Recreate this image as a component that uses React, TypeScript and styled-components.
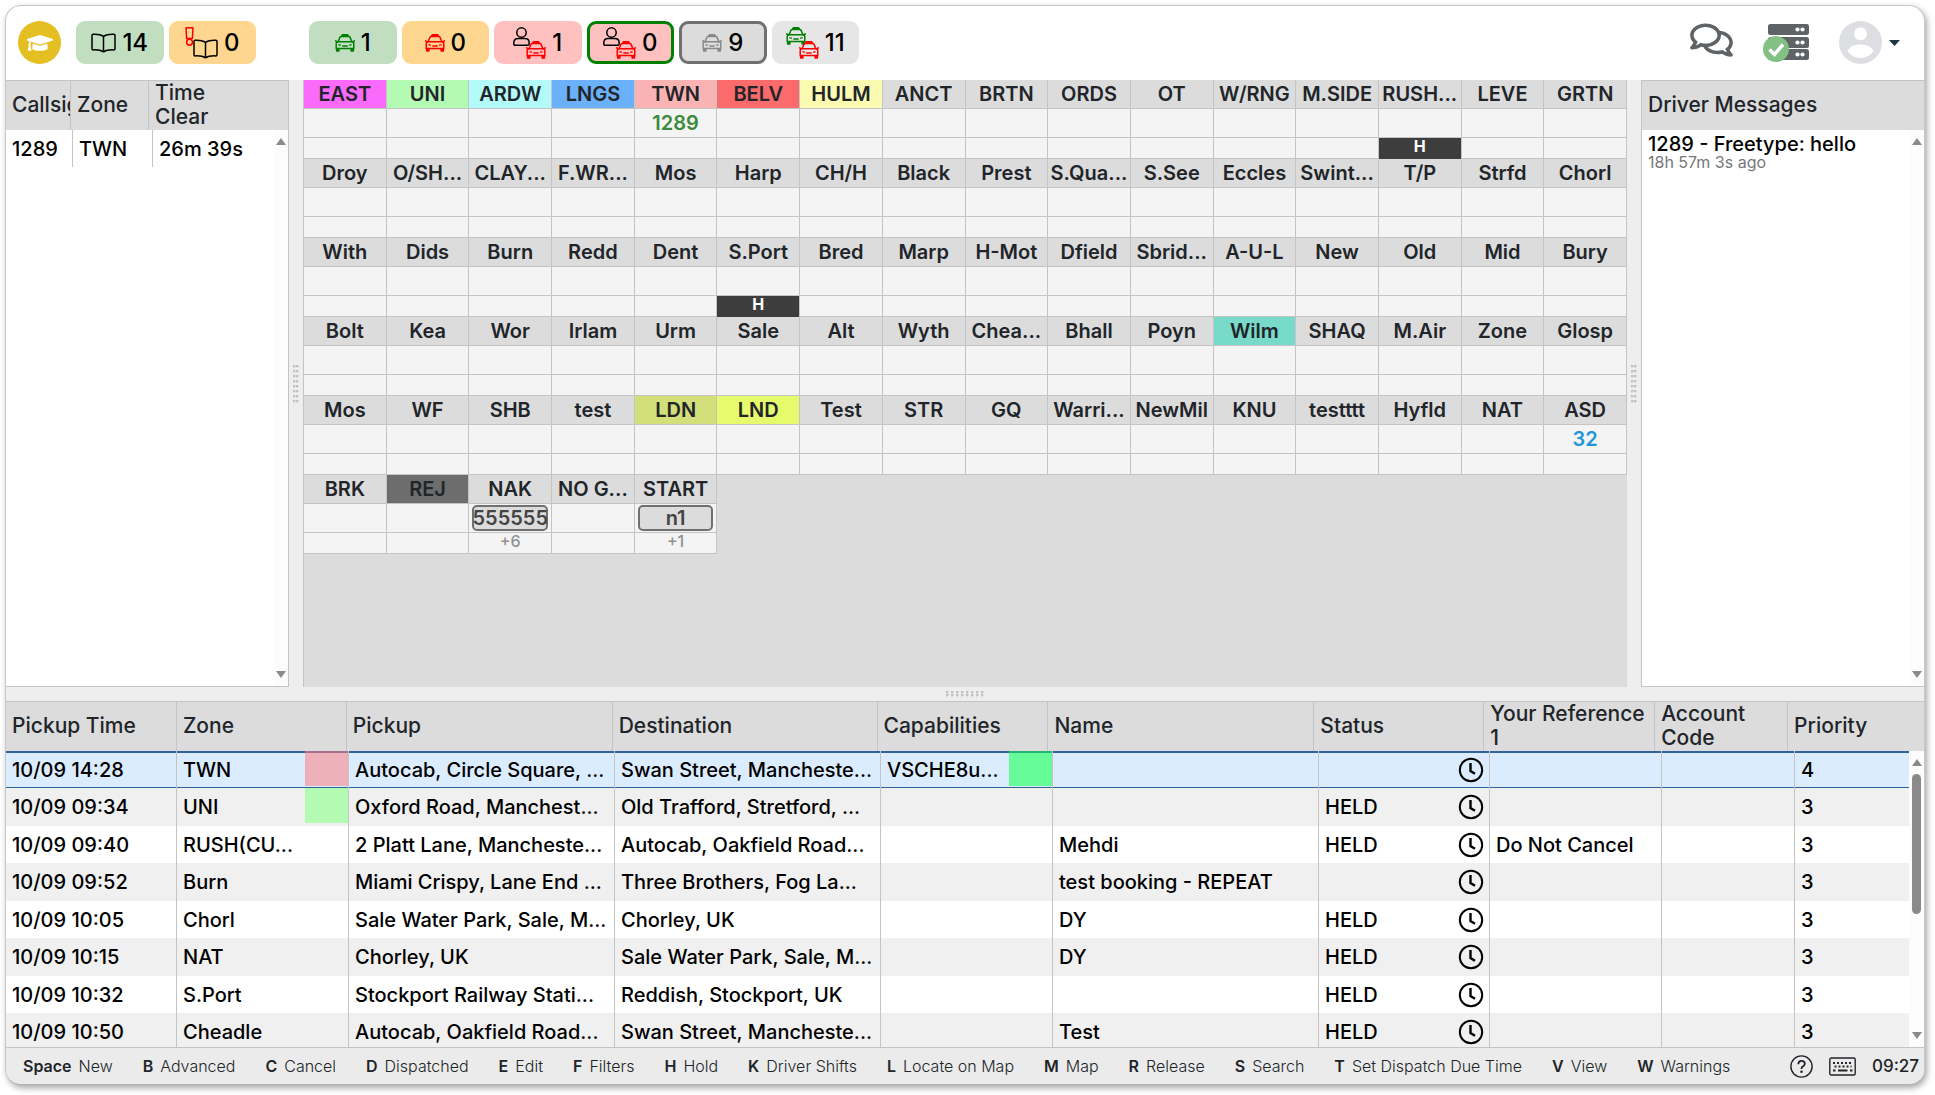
import React from 'react';
import styled, { createGlobalStyle } from 'styled-components';
import { FaGraduationCap, FaRegComments } from 'react-icons/fa';

const Global = createGlobalStyle`
  *, *::before, *::after { box-sizing: border-box; }
  body { margin: 0; background: #fff; color: #212529; font-family: Inter, "Liberation Sans", sans-serif; font-size: 20px; line-height: 24px; }
  button { font: inherit; color: inherit; border: 0; padding: 0; background: none; cursor: pointer; }
  svg { display: block; }
`;

const LINE = '#c4c4c4';
const HEAD = '#dcdcdc';

const Shell = styled.div`
  display: flex;
  flex-direction: column;
  min-height: calc(100vh - 15px);
  margin: 5px 10px 10px 5px;
  border: 1px solid #c8c8c8;
  border-bottom-color: #b4b4b4;
  border-radius: 16px;
  overflow: hidden;
  box-shadow: 2px 3px 6px rgba(0, 0, 0, 0.35);
  background: #fff;
`;

const TopBar = styled.header`
  display: flex;
  align-items: flex-start;
  height: 74px;
  padding: 15px 24px 0 12px;
`;

const Round = styled.button`
  display: grid;
  place-items: center;
  width: 43px;
  height: 43px;
  border-radius: 50%;
  background: #e4bf22;
  color: #fff;
`;

const Counters = styled.div<{ $count: number; $width: number; $gap: number }>`
  display: grid;
  grid-template-columns: repeat(${(p) => p.$count}, 1fr);
  gap: 5px;
  width: ${(p) => p.$width}px;
  margin-left: ${(p) => p.$gap}px;
`;

const Counter = styled.button<{ $bg: string; $edge?: string }>`
  display: flex;
  align-items: center;
  justify-content: center;
  gap: 6px;
  height: 43px;
  border-radius: 9px;
  border: 3px solid ${(p) => p.$edge || p.$bg};
  background: ${(p) => p.$bg};
  color: #000;
  font-size: 24px;
  font-weight: 500;
`;

const Pair = styled.span`
  display: grid;
  width: 33px;
  height: 32px;
  > * { grid-area: 1 / 1; }
  > :last-child { align-self: end; justify-self: end; }
`;

const Tools = styled.div`
  display: flex;
  align-items: flex-start;
  gap: 30px;
  margin-left: auto;
  color: #5f6366;
`;

const Tool = styled.button<{ $top?: boolean }>`
  display: flex;
  align-items: ${(p) => (p.$top ? 'flex-start' : 'center')};
  gap: 7px;
  height: 43px;
`;

const CommentsIcon = styled(FaRegComments)`
  width: 43px;
  height: 38px;
`;

const Panels = styled.main`
  display: grid;
  grid-template-columns: 283px 14px minmax(0, 1fr) 14px 283px;
  flex: 1;
`;

const Splitter = styled.div<{ $wide?: boolean }>`
  display: grid;
  place-items: center;
  min-height: 14px;
  background: #eee;
  &::after {
    content: '';
    width: ${(p) => (p.$wide ? 38 : 6)}px;
    height: ${(p) => (p.$wide ? 6 : 38)}px;
    background: radial-gradient(circle at 1px 1px, #c2c2c2 1px, transparent 2px) 0 0 /
      ${(p) => (p.$wide ? '5px 3px' : '3px 5px')};
  }
`;

const Panel = styled.section<{ $side: 'left' | 'right' }>`
  display: flex;
  flex-direction: column;
  border-top: 1px solid ${LINE};
  border-bottom: 1px solid ${LINE};
  border-${(p) => (p.$side === 'left' ? 'right' : 'left')}: 1px solid ${LINE};
`;

const PanelBody = styled.div`
  display: flex;
  flex: 1;
`;

const PanelTitle = styled.h2`
  display: flex;
  align-items: center;
  height: 49px;
  margin: 0;
  padding: 0 6px 1px;
  background: ${HEAD};
  font-size: 21px;
  font-weight: 500;
`;

const Message = styled.article`
  flex: 1;
  padding: 2px 6px;
  color: #000;
  font-weight: 500;
`;

const Ago = styled.div`
  color: #777;
  font-size: 16px;
  font-weight: 400;
  line-height: 12px;
`;

const Bar = styled.div`
  display: flex;
  flex-direction: column;
  align-items: center;
  width: 15px;
  padding: 8px 0;
  background: #fcfcfc;
`;

const Arrow = styled.span<{ $down?: boolean }>`
  width: 0;
  height: 0;
  margin-top: ${(p) => (p.$down ? 'auto' : '0')};
  border: solid transparent;
  border-width: 0 5px;
  ${(p) => (p.$down ? 'border-top: 7px solid #8a8a8a;' : 'border-bottom: 7px solid #8a8a8a;')}
`;

const Thumb = styled.span`
  width: 9px;
  height: 140px;
  margin-top: 8px;
  border-radius: 5px;
  background: #8a8a8a;
`;

const Table = styled.table`
  display: flex;
  flex-direction: column;
  width: 100%;
  border-spacing: 0;
`;

const HeadRow = styled.tr<{ $cols: string }>`
  display: grid;
  grid-template-columns: ${(p) => p.$cols};
  height: 49px;
  background: ${HEAD};
`;

const Th = styled.th`
  display: flex;
  align-items: center;
  min-width: 0;
  overflow: hidden;
  padding: 0 0 1px 6px;
  border-right: 1px solid ${LINE};
  text-align: left;
  font-size: 21px;
  font-weight: 500;
  &:last-child { border-right: 0; }
`;

const Row = styled.tr<{ $cols: string; $selected?: boolean }>`
  display: grid;
  grid-template-columns: ${(p) => p.$cols};
  height: 37px;
  color: #000;
  background: ${(p) => (p.$selected ? '#dbecff' : '#fff')};
  box-shadow: ${(p) => (p.$selected ? 'inset 0 2px #2f6498, inset 0 -1px #2f6498' : 'none')};
  &:nth-child(even) { height: 38px; background: #f0f0f0; }
`;

const Td = styled.td`
  display: flex;
  align-items: center;
  min-width: 0;
  overflow: hidden;
  white-space: nowrap;
  padding: 0 0 0 6px;
  border-right: 1px solid ${LINE};
  font-weight: 500;
  &:last-child { border-right: 0; }
`;

const Swatch = styled.span<{ $color: string; $edge?: string }>`
  align-self: flex-start;
  flex: none;
  width: 43px;
  height: 35px;
  margin-left: auto;
  background: ${(p) => p.$color};
  border-top: 2px solid ${(p) => p.$edge || p.$color};
`;

const ClockBox = styled.span`
  margin: 0 5px 0 auto;
`;

const Zones = styled.section`
  display: grid;
  grid-template-columns: repeat(16, minmax(0, 1fr));
  align-content: start;
  border-left: 1px solid ${LINE};
  background: ${HEAD};
`;

const Zone = styled.div`
  border-right: 1px solid ${LINE};
  background: #f4f4f4;
  text-align: center;
  font-weight: 600;
`;

const ZoneName = styled.div<{ $bg?: string }>`
  height: 29px;
  overflow: hidden;
  white-space: nowrap;
  border-bottom: 1px solid ${LINE};
  background: ${(p) => p.$bg || HEAD};
  line-height: 28px;
`;

const ZoneCar = styled.div<{ $color?: string }>`
  display: flex;
  align-items: center;
  justify-content: center;
  height: 29px;
  border-bottom: 1px solid ${LINE};
  color: ${(p) => p.$color || '#444'};
`;

const Chip = styled.button`
  display: flex;
  align-items: center;
  justify-content: center;
  flex: 1;
  min-width: 0;
  height: 26px;
  margin: 0 3px;
  border: 2px solid #707070;
  border-radius: 5px;
  background: ${HEAD};
  color: #444;
`;

const ZoneNote = styled.div<{ $held?: boolean }>`
  height: 21px;
  border-bottom: 1px solid ${(p) => (p.$held ? '#3d3d3d' : LINE)};
  background: ${(p) => (p.$held ? '#3d3d3d' : 'transparent')};
  color: ${(p) => (p.$held ? '#fff' : '#909090')};
  font-size: 16px;
  font-weight: ${(p) => (p.$held ? 700 : 500)};
  line-height: 17px;
`;

const Bookings = styled.section`
  border-top: 1px solid ${LINE};
`;

const BookingBody = styled.tbody`
  display: block;
  flex: none;
  height: 296px;
  overflow: hidden;
`;

const BookingGrid = styled.div`
  display: grid;
  grid-template-columns: minmax(0, 1fr) 15px;
  > table { grid-area: 1 / 1 / 2 / 3; }
  > div { grid-area: 1 / 2; margin-top: 49px; z-index: 1; }
  tbody { margin-right: 15px; }
`;

const Footer = styled.footer`
  display: flex;
  align-items: center;
  height: 37px;
  padding: 0 5px 0 17px;
  border-top: 1px solid ${LINE};
  background: #ebebeb;
  font-size: 16px;
`;

const Keys = styled.nav`
  display: flex;
  gap: 30px;
  white-space: nowrap;
`;

const Key = styled.button`
  display: flex;
  gap: 7px;
  font-weight: 300;
  b { font-weight: 600; }
`;

const Status = styled.div`
  display: flex;
  align-items: center;
  gap: 16px;
  margin-left: auto;
  font-size: 17px;
  font-weight: 500;
`;

const Taxi = ({ color }: { color: string }) => (
  <svg width="20" height="18" viewBox="0 0 20 18" fill="none" stroke={color} strokeWidth="1.5" strokeLinejoin="round">
    <path d="M6.5 2.3 7.3.8h5.4l.8 1.5z" fill={color} />
    <path d="M3 8.2 4.8 3.6q.4-1 1.5-1h7.4q1.1 0 1.5 1L17 8.2" />
    <path d="M0 6.6 3.2 8M20 6.6 16.8 8" />
    <path d="M3.2 7.8h13.6q2 0 2 2v4.8H1.2V9.8q0-2 2-2z" />
    <path d="M1.6 14.6v2.5h2.3v-2.5M16.1 14.6v2.5h2.3v-2.5" fill={color} />
    <path d="M3.4 10.6l2.5.8M16.6 10.6l-2.5.8M7.3 12.1h5.4" />
  </svg>
);

const Person = () => (
  <svg width="17" height="19" viewBox="0 0 17 19" fill="none" stroke="#000" strokeWidth="1.5">
    <circle cx="8.5" cy="5.5" r="4.7" />
    <path d="M5.2 11.5h6.6q4.4 0 4.4 4.4v1q0 1.3-1.3 1.3H2.1Q.8 18.2.8 16.9v-1q0-4.4 4.4-4.4z" />
  </svg>
);

const Book = () => (
  <svg width="25" height="20" viewBox="0 0 25 20" fill="none" stroke="#000" strokeWidth="1.5" strokeLinejoin="round">
    <path d="M12.5 3.3Q9 .9 2.2 1.2 1 1.3 1 2.5v13.2q0 1.2 1.2 1.2 7-.3 10.3 1.9 3.3-2.2 10.3-1.9 1.2 0 1.2-1.2V2.5q0-1.2-1.2-1.3-6.8-.3-10.3 2.1zM12.5 3.3v15.5" />
  </svg>
);

const Bang = () => (
  <svg width="9" height="19" viewBox="0 0 9 19" fill="none" stroke="#f00" strokeWidth="1.5" strokeLinejoin="round">
    <path d="M1 .8h7l-.6 10.6H1.6z" />
    <circle cx="4.5" cy="15.2" r="2.9" />
  </svg>
);

const Clock = () => (
  <svg width="26" height="26" viewBox="0 0 26 26" fill="none" stroke="currentColor" strokeWidth="2" role="img" aria-label="Scheduled">
    <circle cx="13" cy="13" r="11.2" />
    <path d="M12.5 6v8l4.5 2.8" strokeWidth="2.4" />
  </svg>
);

const Server = () => (
  <svg width="46" height="40" viewBox="0 0 46 40">
    {[1, 14, 26].map((y) => (
      <g key={y}>
        <rect x="5" y={y} width="41" height="11" rx="2.5" fill="#5f6366" />
        <circle cx="34.5" cy={y + 5.5} r="2.1" fill="#fff" />
        <circle cx="39.5" cy={y + 5.5} r="2.1" fill="#fff" />
      </g>
    ))}
    <circle cx="13" cy="26" r="13" fill="#82c083" />
    <path d="M6.5 26.5l5 5 8.5-10" fill="none" stroke="#fff" strokeWidth="3.5" />
  </svg>
);

const Avatar = () => (
  <svg width="43" height="43" viewBox="0 0 43 43">
    <circle cx="21.5" cy="21.5" r="21.5" fill="#dddee1" />
    <circle cx="21.5" cy="12.8" r="6.5" fill="#fff" />
    <path d="M8.5 30q2.5-6.5 13-6.5t13 6.5q-4.5 7-13 7t-13-7z" fill="#fff" />
  </svg>
);

const Help = () => (
  <svg width="23" height="23" viewBox="0 0 23 23" fill="none" stroke="currentColor" strokeWidth="1.4">
    <circle cx="11.5" cy="11.5" r="10.6" />
    <path d="M8.3 9.2q0-3.4 3.3-3.4 3.2 0 3.2 2.9 0 1.5-1.7 2.5-1.6.9-1.6 2.3v.6" strokeWidth="1.8" />
    <circle cx="11.5" cy="16.8" r=".6" />
  </svg>
);

const Keyboard = () => (
  <svg width="27" height="19" viewBox="0 0 27 19" fill="none" stroke="currentColor" strokeWidth="1.4">
    <rect x=".8" y="1" width="25.4" height="17" rx="1.5" />
    <path d="M4 6h19M5.5 9.5h17" strokeWidth="2" strokeDasharray="2 2" />
    <path d="M4 13.5h2.5M9 13.5h9.5M21 13.5h2.5" strokeWidth="1.8" />
  </svg>
);

const Scroll = ({ thumb }: { thumb?: boolean }) => (
  <Bar aria-hidden="true">
    <Arrow />
    {thumb && <Thumb />}
    <Arrow $down />
  </Bar>
);

const zoneNames = (
  'EAST|UNI|ARDW|LNGS|TWN|BELV|HULM|ANCT|BRTN|ORDS|OT|W/RNG|M.SIDE|RUSH...|LEVE|GRTN|' +
  'Droy|O/SH...|CLAY...|F.WR...|Mos|Harp|CH/H|Black|Prest|S.Qua...|S.See|Eccles|Swint...|T/P|Strfd|Chorl|' +
  'With|Dids|Burn|Redd|Dent|S.Port|Bred|Marp|H-Mot|Dfield|Sbrid...|A-U-L|New|Old|Mid|Bury|' +
  'Bolt|Kea|Wor|Irlam|Urm|Sale|Alt|Wyth|Chea...|Bhall|Poyn|Wilm|SHAQ|M.Air|Zone|Glosp|' +
  'Mos|WF|SHB|test|LDN|LND|Test|STR|GQ|Warri...|NewMil|KNU|testttt|Hyfld|NAT|ASD|' +
  'BRK|REJ|NAK|NO G...|START'
).split('|');

const zoneColors: Record<string, string> = {
  EAST: '#fb6bfb', UNI: '#b3fab3', ARDW: '#b3fafb', LNGS: '#6bb0fa', TWN: '#fab3b3', BELV: '#fb6b6b',
  HULM: '#fafab0', Wilm: '#78dac8', LDN: '#d3df78', LND: '#e6fb6b', REJ: '#6d6d6d',
};
const zoneCars: Record<string, { text: string; color: string }> = {
  TWN: { text: '1289', color: '#3c8a3c' },
  ASD: { text: '32', color: '#2196d8' },
};
const zoneQueue: Record<string, { text: string; more: string }> = {
  NAK: { text: '555555', more: '+6' },
  START: { text: 'n1', more: '+1' },
};
const heldZones = ['RUSH...', 'S.Port'];

type Booking = {
  time: string; zone: string; zoneColor?: string; zoneEdge?: string; from: string; to: string;
  caps?: string; name?: string; held?: boolean; reference?: string; priority: number;
};
const bookings: Booking[] = [
  { time: '10/09 14:28', zone: 'TWN', zoneColor: '#eeb0b9', zoneEdge: '#a8708c', from: 'Autocab, Circle Square, ...', to: 'Swan Street, Mancheste...', caps: 'VSCHE8u...', priority: 4 },
  { time: '10/09 09:34', zone: 'UNI', zoneColor: '#b3fab3', from: 'Oxford Road, Manchest...', to: 'Old Trafford, Stretford, ...', held: true, priority: 3 },
  { time: '10/09 09:40', zone: 'RUSH(CU...', from: '2 Platt Lane, Mancheste...', to: 'Autocab, Oakfield Road...', name: 'Mehdi', held: true, reference: 'Do Not Cancel', priority: 3 },
  { time: '10/09 09:52', zone: 'Burn', from: 'Miami Crispy, Lane End ...', to: 'Three Brothers, Fog La...', name: 'test booking - REPEAT', priority: 3 },
  { time: '10/09 10:05', zone: 'Chorl', from: 'Sale Water Park, Sale, M...', to: 'Chorley, UK', name: 'DY', held: true, priority: 3 },
  { time: '10/09 10:15', zone: 'NAT', from: 'Chorley, UK', to: 'Sale Water Park, Sale, M...', name: 'DY', held: true, priority: 3 },
  { time: '10/09 10:32', zone: 'S.Port', from: 'Stockport Railway Stati...', to: 'Reddish, Stockport, UK', held: true, priority: 3 },
  { time: '10/09 10:50', zone: 'Cheadle', from: 'Autocab, Oakfield Road...', to: 'Swan Street, Mancheste...', name: 'Test', held: true, priority: 3 },
];
const headCols = '171fr 170fr 266fr 265fr 171fr 266fr 170fr 171fr 133fr 136fr';
const bodyCols = '171fr 172fr 266fr 266fr 172fr 266fr 171fr 172fr 133fr 114fr';
const headings = ['Pickup Time', 'Zone', 'Pickup', 'Destination', 'Capabilities', 'Name', 'Status', 'Your Reference 1', 'Account Code', 'Priority'];

const shortcuts = [
  ['Space', 'New'], ['B', 'Advanced'], ['C', 'Cancel'], ['D', 'Dispatched'], ['E', 'Edit'], ['F', 'Filters'],
  ['H', 'Hold'], ['K', 'Driver Shifts'], ['L', 'Locate on Map'], ['M', 'Map'], ['R', 'Release'], ['S', 'Search'],
  ['T', 'Set Dispatch Due Time'], ['V', 'View'], ['W', 'Warnings'],
];

export default function App() {
  return (
    <>
      <Global />
      <Shell>
        <TopBar>
          <Round aria-label="Training"><FaGraduationCap size={26} /></Round>
          <Counters $count={2} $width={180} $gap={15}>
            <Counter $bg="#c1dfc0"><Book />14</Counter>
            <Counter $bg="#ffd68f"><Pair><Bang /><Book /></Pair>0</Counter>
          </Counters>
          <Counters $count={6} $width={550} $gap={53}>
            <Counter $bg="#c1dfc0"><Taxi color="#008000" />1</Counter>
            <Counter $bg="#ffd68f"><Taxi color="#f00" />0</Counter>
            <Counter $bg="#ffc0c0"><Pair><Person /><Taxi color="#f00" /></Pair>1</Counter>
            <Counter $bg="#ffc0c0" $edge="#008000"><Pair><Person /><Taxi color="#f00" /></Pair>0</Counter>
            <Counter $bg="#dcdcdc" $edge="#707070"><Taxi color="#888" />9</Counter>
            <Counter $bg="#e6e6e6"><Pair><Taxi color="#008000" /><Taxi color="#f00" /></Pair>11</Counter>
          </Counters>
          <Tools>
            <Tool $top aria-label="Messages"><CommentsIcon /></Tool>
            <Tool aria-label="Server status"><Server /></Tool>
            <Tool aria-label="Account">
              <Avatar />
              <svg width="11" height="6" viewBox="0 0 11 6"><path d="M0 0h11L5.5 6z" fill="#1a3640" /></svg>
            </Tool>
          </Tools>
        </TopBar>

        <Panels>
          <Panel $side="left">
            <Table>
              <thead>
                <HeadRow $cols="65px 78px 1fr">
                  <Th>Callsign</Th><Th>Zone</Th><Th>Time<br />Clear</Th>
                </HeadRow>
              </thead>
              <tbody />
            </Table>
            <PanelBody>
              <Table>
                <tbody>
                  <Row $cols="67px 80px 1fr">
                    <Td>1289</Td><Td>TWN</Td><Td>26m 39s</Td>
                  </Row>
                </tbody>
              </Table>
              <Scroll />
            </PanelBody>
          </Panel>
          <Splitter />
          <Zones>
            {zoneNames.map((name, i) => (
              <Zone key={i}>
                <ZoneName $bg={zoneColors[name]}>{name}</ZoneName>
                <ZoneCar $color={zoneCars[name]?.color}>
                  {zoneCars[name]?.text}
                  {zoneQueue[name] && <Chip>{zoneQueue[name].text}</Chip>}
                </ZoneCar>
                <ZoneNote $held={heldZones.includes(name)}>
                  {heldZones.includes(name) ? 'H' : zoneQueue[name]?.more}
                </ZoneNote>
              </Zone>
            ))}
          </Zones>
          <Splitter />
          <Panel $side="right">
            <PanelTitle>Driver Messages</PanelTitle>
            <PanelBody>
              <Message>1289 - Freetype: hello<Ago>18h 57m 3s ago</Ago></Message>
              <Scroll />
            </PanelBody>
          </Panel>
        </Panels>

        <Splitter $wide />

        <Bookings>
          <BookingGrid>
            <Table>
              <thead>
                <HeadRow $cols={headCols}>
                  {headings.map((h) => <Th key={h}>{h}</Th>)}
                </HeadRow>
              </thead>
              <BookingBody>
                {bookings.map((b, i) => (
                  <Row key={b.time} $cols={bodyCols} $selected={i === 0}>
                    <Td>{b.time}</Td>
                    <Td>{b.zone}{b.zoneColor && <Swatch $color={b.zoneColor} $edge={b.zoneEdge} />}</Td>
                    <Td>{b.from}</Td>
                    <Td>{b.to}</Td>
                    <Td>{b.caps}{b.caps && <Swatch $color="#66fb98" $edge="#22b573" />}</Td>
                    <Td>{b.name}</Td>
                    <Td>{b.held && 'HELD'}<ClockBox><Clock /></ClockBox></Td>
                    <Td>{b.reference}</Td>
                    <Td />
                    <Td>{b.priority}</Td>
                  </Row>
                ))}
              </BookingBody>
            </Table>
            <Scroll thumb />
          </BookingGrid>
        </Bookings>

        <Footer>
          <Keys>
            {shortcuts.map(([key, label]) => (
              <Key key={key}><b>{key}</b>{label}</Key>
            ))}
          </Keys>
          <Status>
            <button aria-label="Help"><Help /></button>
            <button aria-label="Keyboard shortcuts"><Keyboard /></button>
            <time>09:27</time>
          </Status>
        </Footer>
      </Shell>
    </>
  );
}
